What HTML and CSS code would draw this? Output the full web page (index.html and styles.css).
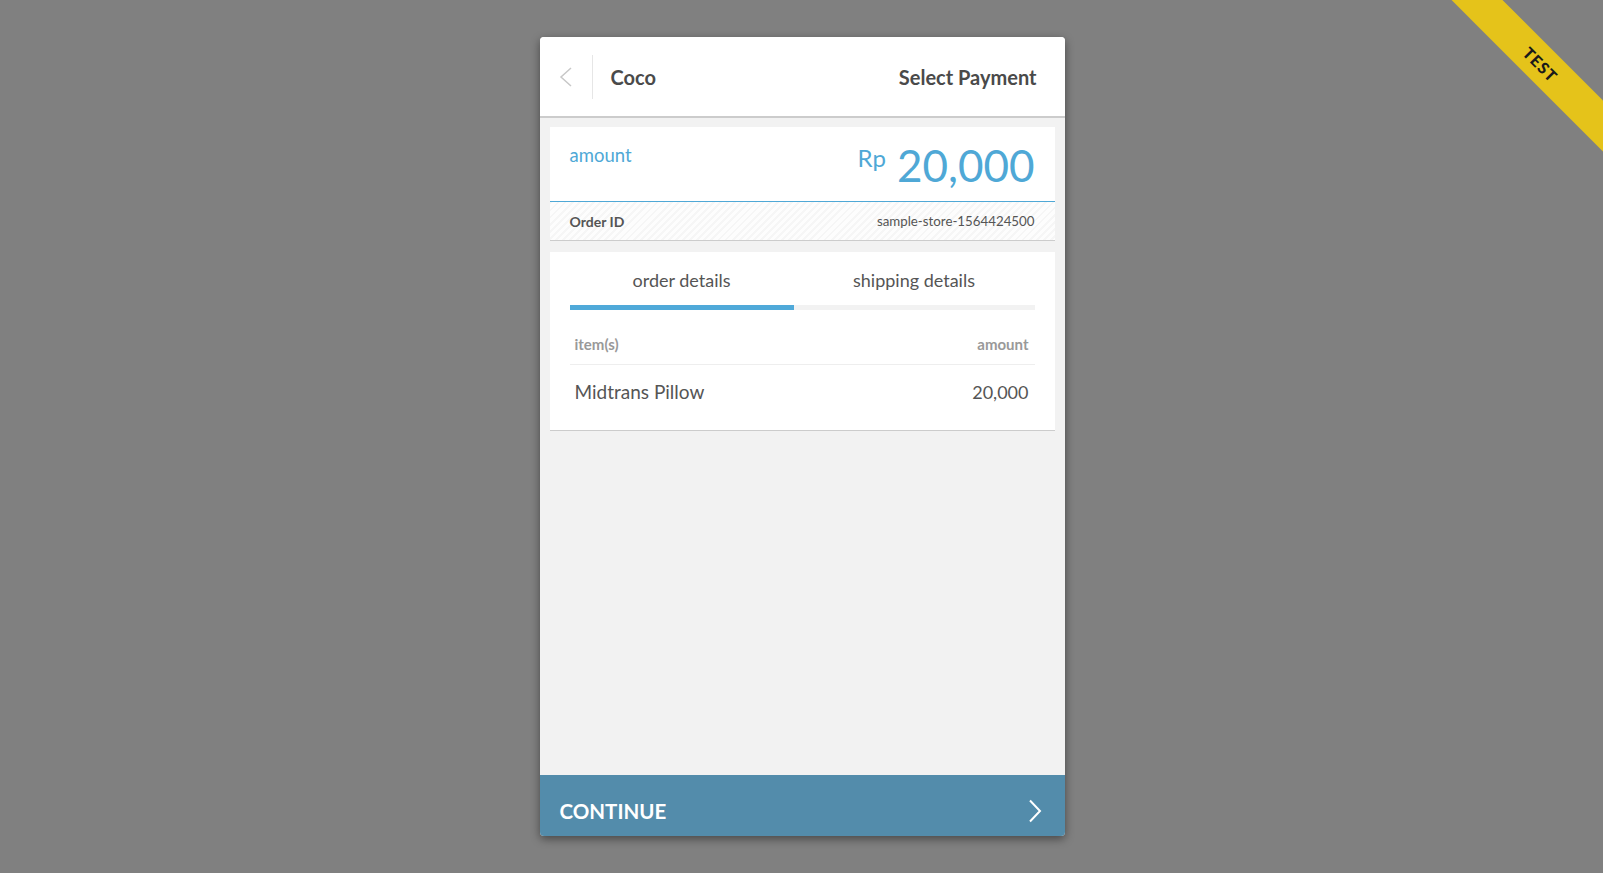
FILE: index.html
```html
<!DOCTYPE html>
<html>
<head>
<meta charset="utf-8">
<link rel="stylesheet" href="styles.css">
</head>
<body>
<div class="page">
  <div class="card">
    <div class="header">
      <div class="back">
        <svg width="14" height="20" viewBox="0 0 14 20"><path d="M12 1 L2 10 L12 19" fill="none" stroke="#c8c8c8" stroke-width="1.5"/></svg>
      </div>
      <div class="merchant">Coco</div>
      <div class="page-title">Select Payment</div>
    </div>
    <div class="content">
      <div class="amount-box">
        <div class="amount-top">
          <div class="amount-label">amount</div>
          <div class="amount-value"><span class="currency">Rp</span><span class="number">20,000</span></div>
        </div>
        <div class="order-row">
          <span class="order-label">Order ID</span>
          <span class="order-id">sample-store-1564424500</span>
        </div>
      </div>
      <div class="details-box">
        <div class="tabs">
          <div class="tab tab-active">order details</div>
          <div class="tab tab-other">shipping details</div>
        </div>
        <div class="table-head">
          <span>item(s)</span>
          <span>amount</span>
        </div>
        <div class="table-row">
          <span>Midtrans Pillow</span>
          <span class="row-amount">20,000</span>
        </div>
      </div>
    </div>
    <div class="continue">
      <span class="continue-text">CONTINUE</span>
      <svg width="14" height="24" viewBox="0 0 14 24"><path d="M2 1.5 L12 12 L2 22.5" fill="none" stroke="#ffffff" stroke-width="2"/></svg>
    </div>
  </div>
</div>
<div class="ribbon">TEST</div>
</body>
</html>
```

FILE: styles.css
```css
html, body {
  margin: 0;
  padding: 0;
}
body {
  background: #808080;
  height: 873px;
  overflow: hidden;
  font-family: "Lato", "Open Sans", sans-serif;
  position: relative;
}
.page {
  display: flex;
  justify-content: center;
  padding-top: 37px;
  padding-left: 1px;
}
.card {
  width: 525px;
  height: 799px;
  display: flex;
  flex-direction: column;
  border-radius: 4px;
  overflow: hidden;
  background: #f2f2f2;
  box-shadow: 0 3px 10px rgba(0, 0, 0, 0.45);
}
.header {
  height: 79px;
  flex: none;
  background: #ffffff;
  border-bottom: 2px solid #cccccc;
  display: flex;
  align-items: center;
}
.back {
  width: 52px;
  height: 44px;
  border-right: 1px solid #e6e6e6;
  display: flex;
  align-items: center;
  justify-content: center;
}
.merchant {
  padding-left: 18px;
  font-size: 20px;
  font-weight: bold;
  color: #4a4a4a;
}
.page-title {
  margin-left: auto;
  padding-right: 28px;
  font-size: 20px;
  font-weight: bold;
  color: #4a4a4a;
}
.content {
  flex: 1;
  padding: 9px 10px 0 10px;
  display: flex;
  flex-direction: column;
  gap: 11px;
}
.amount-box {
  background: #ffffff;
  border-bottom: 1px solid #cccccc;
}
.amount-top {
  height: 74px;
  border-bottom: 1px solid #4fa8d6;
  display: flex;
  justify-content: space-between;
  align-items: flex-start;
  padding: 0 20px;
  color: #4fa8d6;
}
.amount-label {
  margin-top: 17px;
  font-size: 18.5px;
  line-height: 22px;
}
.amount-value {
  display: flex;
  align-items: flex-start;
  margin-top: 14px;
}
.currency {
  font-size: 24px;
  line-height: 26px;
  margin-right: 11px;
  margin-top: 4px;
}
.number {
  font-size: 44px;
  line-height: 48px;
}
.order-row {
  height: 38px;
  padding: 0 20px;
  display: flex;
  justify-content: space-between;
  align-items: center;
  background: repeating-linear-gradient(135deg, #f6f6f6 0 2px, #fdfdfd 2px 5px);
  color: #555555;
  font-size: 14px;
}
.order-label {
  font-weight: bold;
}
.order-id {
  font-size: 13.3px;
}
.details-box {
  background: #ffffff;
  border-bottom: 1px solid #cccccc;
  padding: 0 20px;
}
.tabs {
  display: flex;
}
.tab {
  height: 50px;
  padding-top: 3px;
  display: flex;
  align-items: center;
  justify-content: center;
  font-size: 18px;
  color: #555555;
  border-bottom: 5px solid #f2f2f2;
}
.tab-active {
  width: 224px;
  border-bottom-color: #4fa9d9;
}
.tab-other {
  flex: 1;
}
.table-head {
  height: 55px;
  box-sizing: border-box;
  padding: 0 6px 10px 5px;
  display: flex;
  justify-content: space-between;
  align-items: flex-end;
  border-bottom: 1px solid #eeeeee;
  font-size: 15px;
  line-height: 20px;
  font-weight: bold;
  color: #999999;
}
.table-row {
  height: 65px;
  box-sizing: border-box;
  padding: 15px 6px 0 5px;
  display: flex;
  justify-content: space-between;
  align-items: flex-start;
  font-size: 19px;
  line-height: 24px;
  color: #555555;
}
.row-amount {
  font-size: 18px;
}
.continue {
  height: 61px;
  flex: none;
  background: #538cab;
  display: flex;
  align-items: center;
  justify-content: space-between;
  padding: 0 23px 0 20px;
  color: #ffffff;
}
.continue-text {
  font-size: 20.5px;
  font-weight: bold;
  padding-top: 10px;
}
.continue svg {
  margin-top: 10px;
}
.ribbon {
  position: absolute;
  left: 1411px;
  top: 46px;
  width: 260px;
  height: 36px;
  background: #e5c31a;
  transform: rotate(45deg);
  display: flex;
  align-items: center;
  justify-content: center;
  font-size: 16px;
  font-weight: 900;
  letter-spacing: 1px;
  color: #1a1a1a;
}
```
